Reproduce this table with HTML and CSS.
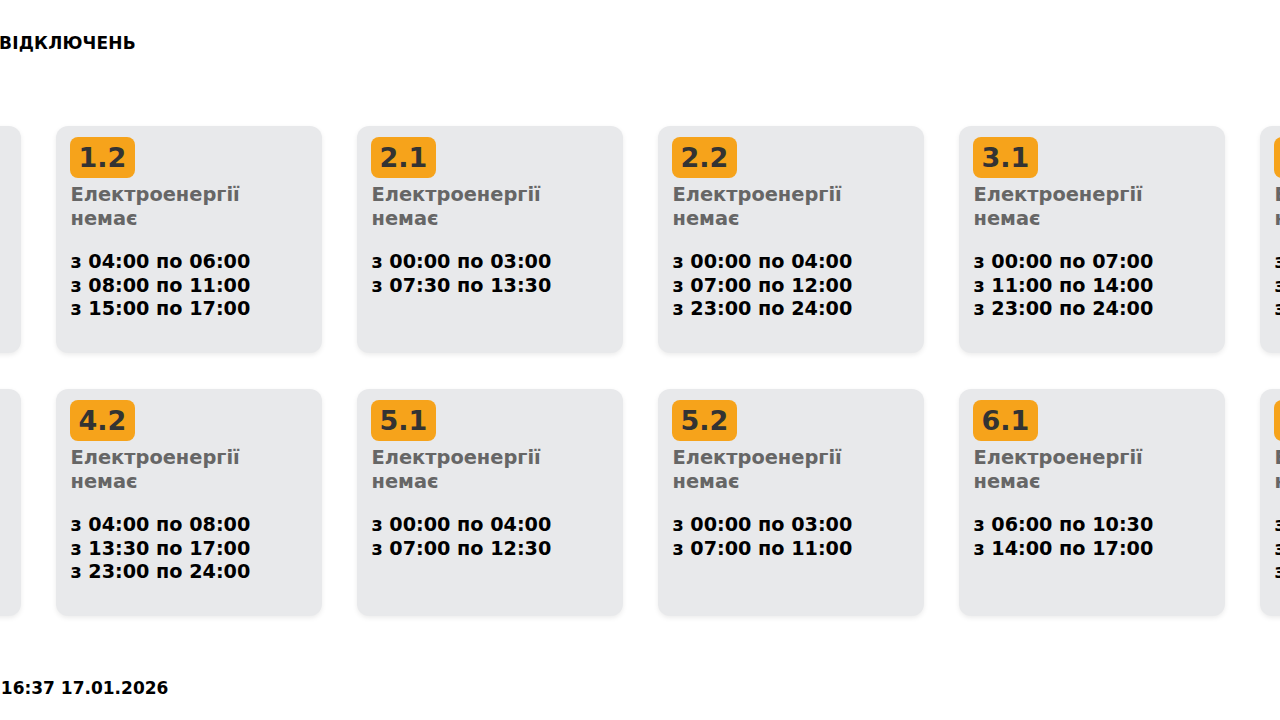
FILE: index.html
```html
<!DOCTYPE html>
<html lang="uk">
<head>
<meta charset="utf-8">
<title>Графік відключень</title>
<link rel="stylesheet" href="styles.css">
</head>
<body>
<div class="page">
  <main class="board">
    <h1 class="title">ГРАФІКИ ПОГОДИННИХ ВІДКЛЮЧЕНЬ</h1>
    <section class="grid">
      <article class="card"><span class="badge">1.1</span><p class="status">Електроенергії немає</p><ul class="times"><li>з 00:00 по 03:00</li><li>з 07:30 по 11:00</li><li>з 15:00 по 17:00</li></ul></article>
      <article class="card"><span class="badge">1.2</span><p class="status">Електроенергії немає</p><ul class="times"><li>з 04:00 по 06:00</li><li>з 08:00 по 11:00</li><li>з 15:00 по 17:00</li></ul></article>
      <article class="card"><span class="badge">2.1</span><p class="status">Електроенергії немає</p><ul class="times"><li>з 00:00 по 03:00</li><li>з 07:30 по 13:30</li></ul></article>
      <article class="card"><span class="badge">2.2</span><p class="status">Електроенергії немає</p><ul class="times"><li>з 00:00 по 04:00</li><li>з 07:00 по 12:00</li><li>з 23:00 по 24:00</li></ul></article>
      <article class="card"><span class="badge">3.1</span><p class="status">Електроенергії немає</p><ul class="times"><li>з 00:00 по 07:00</li><li>з 11:00 по 14:00</li><li>з 23:00 по 24:00</li></ul></article>
      <article class="card"><span class="badge">3.2</span><p class="status">Електроенергії немає</p><ul class="times"><li>з 03:00 по 07:00</li><li>з 11:00 по 14:00</li><li>з 18:00 по 21:00</li></ul></article>
      <article class="card"><span class="badge">4.1</span><p class="status">Електроенергії немає</p><ul class="times"><li>з 00:00 по 04:00</li><li>з 08:00 по 13:30</li><li>з 17:00 по 21:00</li></ul></article>
      <article class="card"><span class="badge">4.2</span><p class="status">Електроенергії немає</p><ul class="times"><li>з 04:00 по 08:00</li><li>з 13:30 по 17:00</li><li>з 23:00 по 24:00</li></ul></article>
      <article class="card"><span class="badge">5.1</span><p class="status">Електроенергії немає</p><ul class="times"><li>з 00:00 по 04:00</li><li>з 07:00 по 12:30</li></ul></article>
      <article class="card"><span class="badge">5.2</span><p class="status">Електроенергії немає</p><ul class="times"><li>з 00:00 по 03:00</li><li>з 07:00 по 11:00</li></ul></article>
      <article class="card"><span class="badge">6.1</span><p class="status">Електроенергії немає</p><ul class="times"><li>з 06:00 по 10:30</li><li>з 14:00 по 17:00</li></ul></article>
      <article class="card"><span class="badge">6.2</span><p class="status">Електроенергії немає</p><ul class="times"><li>з 03:00 по 06:00</li><li>з 10:30 по 14:00</li><li>з 17:00 по 20:00</li></ul></article>
    </section>
    <footer class="updated">Останнє оновлення: 16:37 17.01.2026</footer>
  </main>
</div>
</body>
</html>
```
FILE: styles.css
```css
html, body {
  margin: 0;
  padding: 0;
  background: #ffffff;
  overflow: hidden;
}

body {
  font-family: "DejaVu Sans", "Liberation Sans", sans-serif;
  color: #000000;
  width: 1280px;
  height: 720px;
}

.page {
  display: flex;
  justify-content: center;
  width: 1280px;
}

.board {
  flex: none;
  width: 1771px;
  display: flex;
  flex-direction: column;
}

.title {
  margin: 32px 0 0 2px;
  font-size: 17px;
  font-weight: bold;
  line-height: 22px;
  letter-spacing: 0.2px;
}

.grid {
  margin-top: 72px;
  display: grid;
  grid-template-columns: repeat(6, 266px);
  grid-auto-rows: 227px;
  column-gap: 35px;
  row-gap: 36px;
}

.card {
  box-sizing: border-box;
  background: #e8e9eb;
  border-radius: 12px;
  box-shadow: 0 2px 5px rgba(0, 0, 0, 0.08);
  padding: 11px 14px 11px 15px;
  display: flex;
  flex-direction: column;
  align-items: flex-start;
}

.badge {
  margin-left: -1px;
  background: #f6a31b;
  color: #333333;
  border-radius: 8px;
  font-size: 27px;
  font-weight: bold;
  line-height: 33px;
  padding: 4px 9px;
}

.status {
  margin: 5px 0 0 0;
  color: #666666;
  font-size: 19.4px;
  font-weight: bold;
  line-height: 24px;
}

.times {
  list-style: none;
  margin: 19px 0 0 0;
  padding: 0;
  font-size: 19.2px;
  font-weight: bold;
  line-height: 23.5px;
}

.updated {
  margin: 61px 0 0 44px;
  font-size: 17px;
  font-weight: bold;
  line-height: 22px;
}
```
